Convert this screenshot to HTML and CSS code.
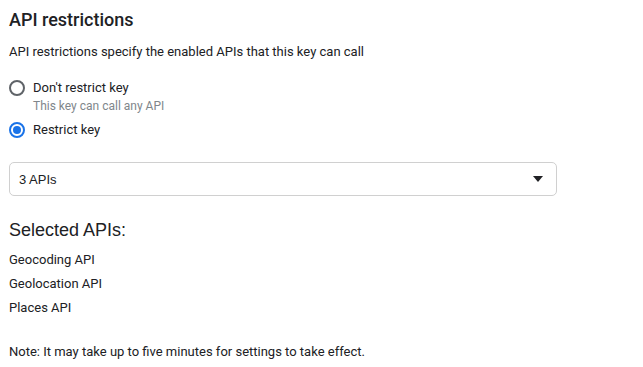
FILE: index.html
```html
<!DOCTYPE html>
<html lang="en">
<head>
    <meta name="viewport" content="width=device-width, initial-scale=1.0">
    <title>API restrictions</title>
    <link rel="stylesheet" href="styles.css">
</head>
<body>
    <div class="panel">
        <h2 class="title">API restrictions</h2>
        <p class="desc">API restrictions specify the enabled APIs that this key can call</p>

        <div class="radio-group">
            <label class="radio">
                <span class="dot"></span>
                <span class="radio-text">
                    <span class="radio-label">Don't restrict key</span>
                    <span class="radio-hint">This key can call any API</span>
                </span>
            </label>
            <label class="radio checked">
                <span class="dot"></span>
                <span class="radio-text">
                    <span class="radio-label">Restrict key</span>
                </span>
            </label>
        </div>

        <div class="select">
            <span>3 APIs</span>
            <span class="arrow"></span>
        </div>

        <h3 class="sub-title">Selected APIs:</h3>
        <ul class="api-list">
            <li>Geocoding API</li>
            <li>Geolocation API</li>
            <li>Places API</li>
        </ul>

        <p class="note">Note: It may take up to five minutes for settings to take effect.</p>
    </div>
</body>
</html>
```

FILE: styles.css
```css
body {
    margin: 0;
    background: #fff;
    font-family: Roboto, 'Liberation Sans', Arial, sans-serif;
    color: #202124;
}

.panel {
    padding: 8px 9px;
    width: 548px;
}

.title {
    margin: 0;
    font-size: 18px;
    font-weight: 500;
    line-height: 24px;
}

.desc {
    margin: 11px 0 0;
    font-size: 13px;
    line-height: 18px;
}

.radio-group {
    margin-top: 18px;
    display: flex;
    flex-direction: column;
    gap: 6px;
}

.radio {
    display: flex;
    align-items: flex-start;
    gap: 8px;
}

.dot {
    box-sizing: border-box;
    width: 16px;
    height: 16px;
    margin-top: 1px;
    border: 2px solid #5f6368;
    border-radius: 50%;
    display: flex;
    align-items: center;
    justify-content: center;
}

.checked .dot {
    border-color: #1a73e8;
}

.checked .dot::after {
    content: "";
    width: 8px;
    height: 8px;
    border-radius: 50%;
    background: #1a73e8;
}

.radio-text {
    display: flex;
    flex-direction: column;
}

.radio-label {
    font-size: 13px;
    line-height: 18px;
}

.radio-hint {
    font-size: 12px;
    line-height: 18px;
    color: #80868b;
}

.select {
    margin-top: 23px;
    height: 34px;
    box-sizing: border-box;
    border: 1px solid #d0d0d0;
    border-radius: 5px;
    padding: 0 13px 0 9px;
    display: flex;
    align-items: center;
    justify-content: space-between;
    font-family: 'Liberation Sans', Arial, sans-serif;
    font-size: 13px;
}

.arrow {
    width: 0;
    height: 0;
    border-left: 5px solid transparent;
    border-right: 5px solid transparent;
    border-top: 6px solid #202124;
}

.sub-title {
    margin: 22px 0 0;
    font-family: 'Liberation Sans', Arial, sans-serif;
    font-size: 18px;
    font-weight: 400;
    line-height: 24px;
}

.api-list {
    list-style: none;
    margin: 6px 0 0;
    padding: 0;
    font-size: 13px;
}

.api-list li {
    line-height: 24px;
}

.note {
    margin: 23px 0 0;
    font-size: 13px;
    line-height: 18px;
}
```
